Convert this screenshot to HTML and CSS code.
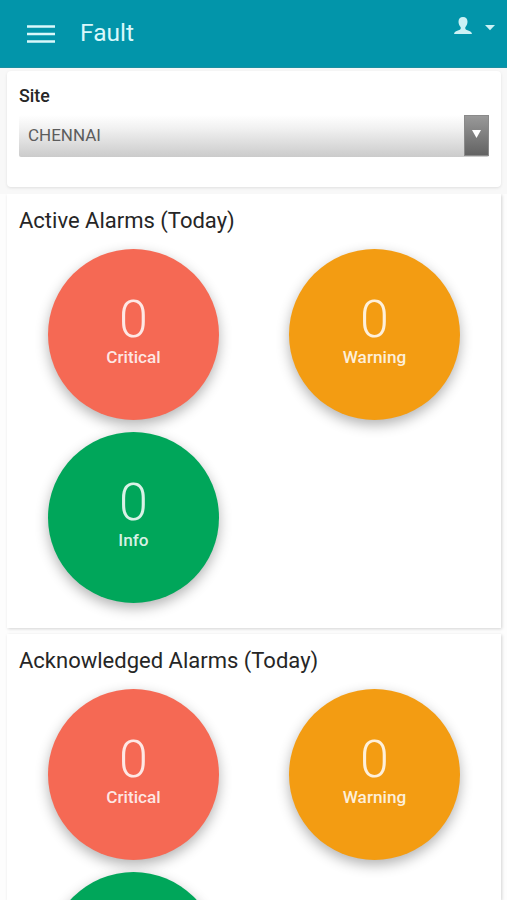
FILE: index.html
```html
<!DOCTYPE html>
<html lang="en">
<head>
<meta charset="utf-8">
<title>Fault</title>
<link rel="stylesheet" href="styles.css">
</head>
<body>
<header class="bar">
  <svg class="menu" width="28" height="18" viewBox="0 0 28 18"><path d="M0 1.5h28M0 9h28M0 16.500h28" stroke="#d9f8fb" stroke-width="2.600"/></svg>
  <h1 class="title">Fault</h1>
  <svg class="user" width="18" height="18" viewBox="0 0 18 18"><path d="M9 0C6.100 0 4.500 1.900 4.500 4.800c0 2.200.9 4.200 2.200 5.400v1.300c0 .7-.5 1.100-1.500 1.500C2.300 14.200.3 14.600 0 17h18c-.3-2.400-2.300-2.800-5.200-4-1-.4-1.500-.8-1.500-1.500v-1.300c1.300-1.200 2.200-3.200 2.200-5.400C13.500 1.900 11.900 0 9 0z" fill="#ccf1f5"/></svg>
  <svg class="caret" width="10" height="6" viewBox="0 0 10 6"><path d="M0 0h10L5 5.300z" fill="#ccf1f5"/></svg>
</header>
<section class="filter">
  <div class="site-card">
    <div class="label">Site</div>
    <div class="select">
      <span class="value">CHENNAI</span>
      <span class="arrow"><svg width="9" height="8" viewBox="0 0 9 8"><path d="M0 0h9L4.500 8z" fill="#fff"/></svg></span>
    </div>
  </div>
</section>
<main class="panels">
  <section class="panel">
    <h2 class="heading">Active Alarms (Today)</h2>
    <div class="grid">
      <div class="circle critical"><span class="count">0</span><span class="name">Critical</span></div>
      <div class="circle warning"><span class="count">0</span><span class="name">Warning</span></div>
      <div class="circle info"><span class="count">0</span><span class="name">Info</span></div>
    </div>
  </section>
  <section class="panel panel-last">
    <h2 class="heading">Acknowledged Alarms (Today)</h2>
    <div class="grid">
      <div class="circle critical"><span class="count">0</span><span class="name">Critical</span></div>
      <div class="circle warning"><span class="count">0</span><span class="name">Warning</span></div>
      <div class="circle info"></div>
    </div>
  </section>
</main>
</body>
</html>
```
FILE: styles.css
```css
* { box-sizing: border-box; }
body {
  margin: 0;
  height: 900px;
  overflow: hidden;
  background: #fdfdfd;
  color: #262626;
  font-family: Roboto, "Liberation Sans", sans-serif;
}
svg { display: block; flex: none; }
.bar {
  display: flex;
  align-items: flex-start;
  height: 68px;
  padding: 0 12px 0 27px;
  background: #0295aa;
  border-bottom: 1px solid #1c8fa1;
}
.menu { margin-top: 25px; }
.title {
  margin: 18px auto 0 25px;
  font-size: 24.500px;
  line-height: 30px;
  font-weight: 400;
  color: #d9f8fb;
}
.user { margin-top: 17px; }
.caret { margin: 25px 0 0 13px; }
.filter {
  height: 126px;
  padding: 3px 6px 0 7px;
  background: #f8f8f8;
}
.site-card {
  height: 116px;
  padding: 14px 12px 0;
  background: #fff;
  border-radius: 4px;
  box-shadow: 0 1px 3px rgba(0, 0, 0, .1);
}
.label {
  font-size: 17.800px;
  line-height: 22px;
  font-weight: 500;
}
.select {
  display: flex;
  justify-content: space-between;
  height: 42px;
  margin-top: 8px;
  border-radius: 2px;
  background: linear-gradient(#fff, #f2f2f2 30%, #cbcbcb);
}
.value {
  padding-left: 9px;
  font-size: 17px;
  line-height: 41px;
  color: #5c5c5c;
}
.arrow {
  display: flex;
  justify-content: center;
  width: 25px;
  height: 41px;
  padding-top: 14px;
  background: linear-gradient(#999, #636363);
  border: 1px solid #8a8a8a;
}
.panels {
  display: flex;
  flex-direction: column;
  gap: 6px;
  height: 706px;
  padding: 0 6px 0 7px;
  overflow: hidden;
}
.panel {
  height: 434px;
  padding: 12px 12px 0;
  flex: none;
  background: #fff;
  box-shadow: 1px 1px 3px rgba(0, 0, 0, .17);
}
.panel-last {
  height: 266px;
  overflow: hidden;
}
.heading {
  margin: 0;
  font-size: 22px;
  line-height: 30px;
  font-weight: 400;
}
.grid {
  display: grid;
  grid-template-columns: 171px 171px;
  gap: 12px 70px;
  padding: 13px 0 0 29px;
}
.circle {
  display: flex;
  flex-direction: column;
  align-items: center;
  height: 171px;
  padding-top: 46px;
  border-radius: 50%;
  color: rgba(255, 255, 255, .85);
  box-shadow: 0 5px 13px rgba(0, 0, 0, .3);
}
.critical { background: #f56954; }
.warning { background: #f39c12; }
.info { background: #00a65a; }
.count {
  font-size: 52px;
  line-height: 50px;
  font-weight: 300;
}
.name {
  margin-top: 1px;
  font-size: 17.200px;
  line-height: 22px;
  font-weight: 500;
}
```
